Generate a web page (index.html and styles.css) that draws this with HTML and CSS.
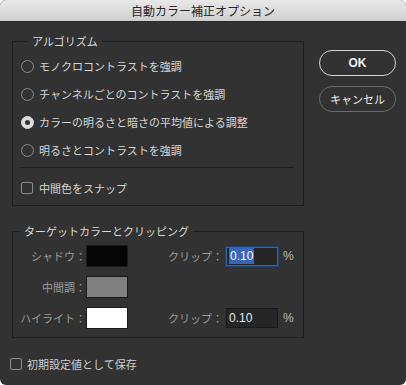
FILE: index.html
```html
<!DOCTYPE html>
<html lang="ja">
<head>
<meta charset="utf-8">
<link rel="stylesheet" href="styles.css">
</head>
<body>
<div class="window">
  <div class="titlebar">自動カラー補正オプション</div>
  <div class="main">
    <div class="left">
      <fieldset class="group algo">
        <legend>アルゴリズム</legend>
        <div class="row"><span class="radio"></span><span>モノクロコントラストを強調</span></div>
        <div class="row"><span class="radio"></span><span>チャンネルごとのコントラストを強調</span></div>
        <div class="row"><span class="radio on"></span><span>カラーの明るさと暗さの平均値による調整</span></div>
        <div class="row"><span class="radio"></span><span>明るさとコントラストを強調</span></div>
        <div class="sep"></div>
        <div class="row check-row"><span class="check"></span><span>中間色をスナップ</span></div>
      </fieldset>
      <fieldset class="group target">
        <legend>ターゲットカラーとクリッピング</legend>
        <div class="trow">
          <span class="lbl">シャドウ：</span>
          <span class="swatch black"></span>
          <span class="clbl">クリップ：</span>
          <span class="input focus"><span class="sel">0.10</span></span>
          <span class="pct">%</span>
        </div>
        <div class="trow">
          <span class="lbl">中間調：</span>
          <span class="swatch gray"></span>
        </div>
        <div class="trow">
          <span class="lbl">ハイライト：</span>
          <span class="swatch white"></span>
          <span class="clbl">クリップ：</span>
          <span class="input"><span>0.10</span></span>
          <span class="pct">%</span>
        </div>
      </fieldset>
    </div>
    <div class="buttons">
      <div class="btn ok">OK</div>
      <div class="btn cancel">キャンセル</div>
    </div>
  </div>
  <div class="footer">
    <span class="check"></span><span>初期設定値として保存</span>
  </div>
</div>
</body>
</html>
```
FILE: styles.css
```css
html, body {
  margin: 0;
  padding: 0;
  background: #ffffff;
}
body {
  font-family: "Noto Sans CJK JP", "Noto Sans", sans-serif;
  font-size: 11px;
  color: #d6d6d6;
}
.window {
  width: 406px;
  height: 385px;
  background: #323232;
  border-radius: 6px;
  overflow: hidden;
  display: flex;
  flex-direction: column;
}
.titlebar {
  box-sizing: border-box;
  height: 22px;
  background: linear-gradient(#e8e8e8, #cfcfcf);
  border-bottom: 1px solid #2a2a2a;
  color: #262626;
  font-size: 12px;
  line-height: 21px;
  text-align: center;
}
.main {
  display: flex;
  padding: 11px 10px 0 12px;
  gap: 15px;
}
.left {
  width: 292px;
  display: flex;
  flex-direction: column;
}
.group {
  margin: 0;
  border: 1px solid #1f1f1f;
  min-width: 0;
}
.group legend {
  font-size: 11px;
  line-height: 16px;
  padding: 0 4px;
  margin-left: 7px;
  color: #dadada;
}
.algo {
  padding: 3px 8px 3px 8px;
}
.row {
  height: 28px;
  display: flex;
  align-items: center;
  gap: 5px;
  white-space: nowrap;
}
.check-row {
  gap: 6px;
}
.radio {
  box-sizing: border-box;
  width: 13px;
  height: 13px;
  border: 1px solid #8c8c8c;
  border-radius: 50%;
  flex: none;
  display: flex;
  align-items: center;
  justify-content: center;
}
.radio.on {
  background: #dcdcdc;
  border-color: #dcdcdc;
}
.radio.on::after {
  content: "";
  width: 5px;
  height: 5px;
  border-radius: 50%;
  background: #323232;
}
.check {
  box-sizing: border-box;
  width: 12px;
  height: 12px;
  border: 1px solid #8c8c8c;
  border-radius: 2px;
  flex: none;
}
.sep {
  height: 1px;
  background: #1f1f1f;
  margin: 3px 1px 6px -1px;
}
.target {
  margin-top: 17px;
  padding: 6px 0 8px 0;
}
.trow {
  height: 22px;
  display: flex;
  align-items: center;
  margin-bottom: 9px;
  color: #9c9c9c;
  white-space: nowrap;
}
.trow:last-child {
  margin-bottom: 0;
}
.lbl {
  width: 73px;
  text-align: right;
}
.swatch {
  box-sizing: border-box;
  width: 42px;
  height: 22px;
  border: 1px solid #1a1a1a;
  flex: none;
}
.swatch.black { background: #050505; }
.swatch.gray { background: #808080; }
.swatch.white { background: #ffffff; }
.clbl {
  width: 95px;
  text-align: right;
}
.input {
  box-sizing: border-box;
  width: 52px;
  height: 20px;
  margin-left: 3px;
  background: #262626;
  border: 1px solid #1a1a1a;
  font-family: "Liberation Sans", "Noto Sans", sans-serif;
  font-size: 12px;
  color: #e6e6e6;
  display: flex;
  align-items: center;
  padding-left: 2px;
}
.input.focus {
  border: 1px solid #2f67b0;
  box-shadow: 0 0 0 1px #1d4577;
  height: 19px;
}
.sel {
  background: #3566b8;
  color: #ffffff;
  line-height: 16px;
  padding: 0 1px;
}
.pct {
  margin-left: 5px;
  font-family: "Liberation Sans", "Noto Sans", sans-serif;
  font-size: 12px;
  color: #bdbdbd;
}
.buttons {
  margin-top: 17px;
  width: 77px;
  display: flex;
  flex-direction: column;
  gap: 10px;
}
.btn {
  box-sizing: border-box;
  height: 26px;
  border-radius: 13px;
  display: flex;
  align-items: center;
  justify-content: center;
  color: #f0f0f0;
}
.btn.ok {
  border: 1.5px solid #d6d6d6;
  font-family: "Liberation Sans", "Noto Sans", sans-serif;
  font-weight: bold;
  font-size: 12px;
}
.btn.cancel {
  border: 1px solid #6c6c6c;
  font-size: 11px;
}
.footer {
  margin-top: 18px;
  padding-left: 10px;
  height: 16px;
  display: flex;
  align-items: center;
  gap: 5px;
  color: #cfcfcf;
}
```
